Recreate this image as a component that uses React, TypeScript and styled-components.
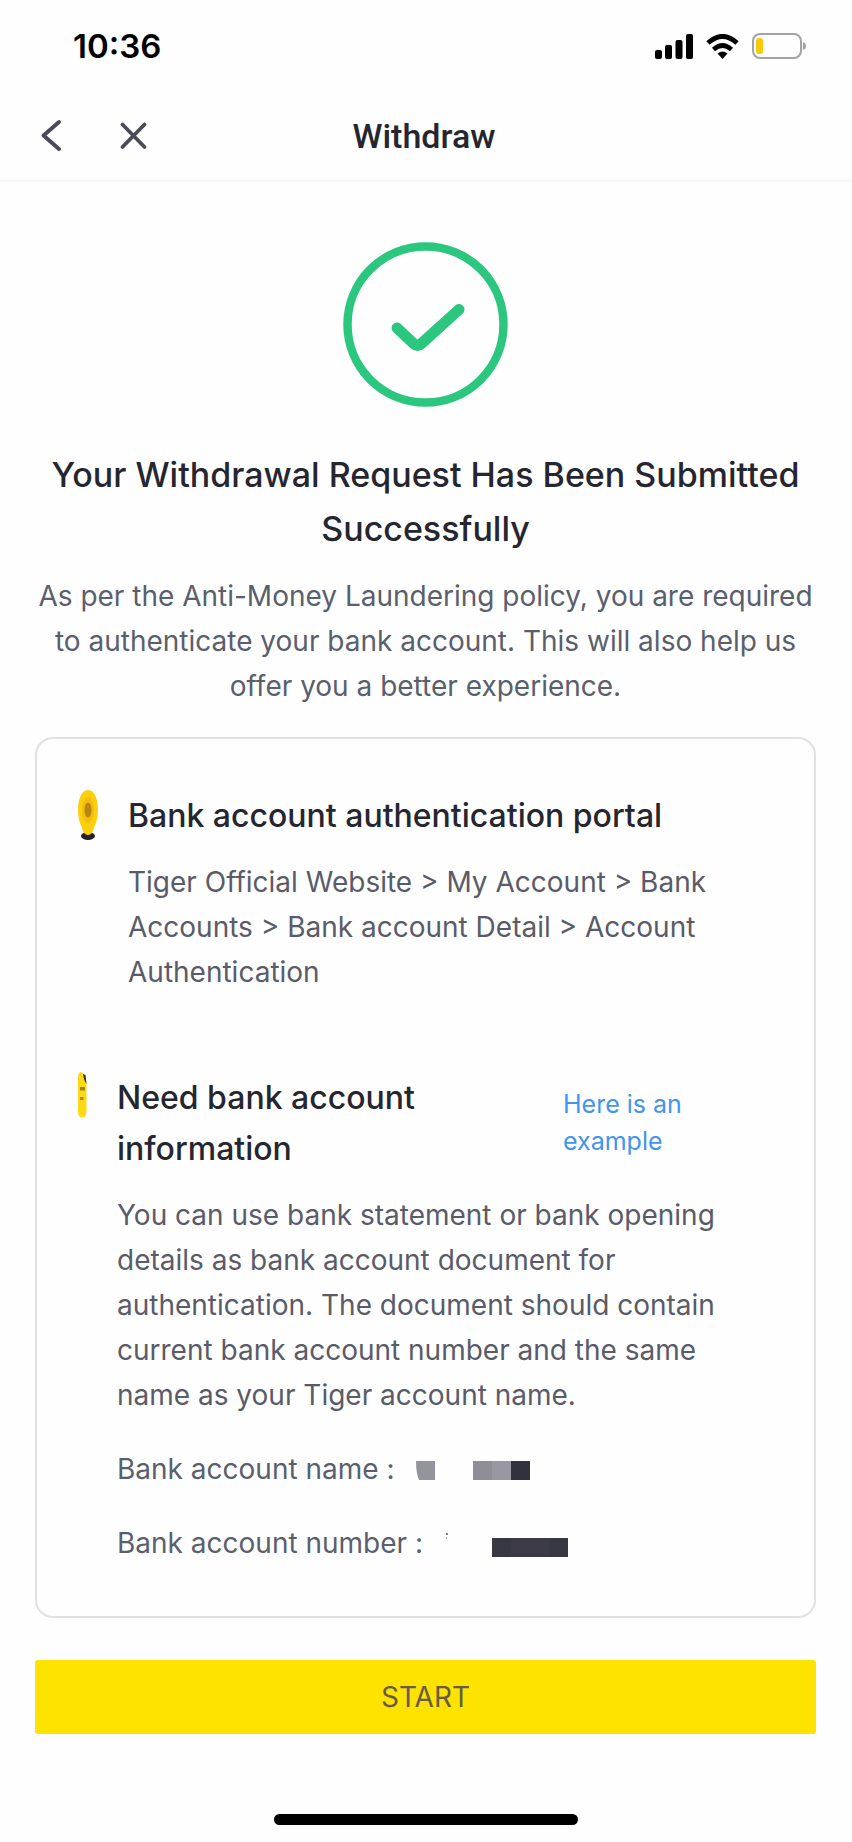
import React from "react";
import styled, { createGlobalStyle } from "styled-components";

const GlobalStyle = createGlobalStyle`
  *, *::before, *::after { box-sizing: border-box; }
  body {
    margin: 0;
    background: #fefefe;
    font-family: Inter, "Liberation Sans", sans-serif;
    color: #25262f;
  }
  h1, h2, h3, p, dl, dd, dt { margin: 0; font-weight: 400; }
`;

const Screen = styled.div`
  min-height: 100vh;
  display: flex;
  flex-direction: column;
`;

const StatusBar = styled.div`
  display: flex;
  align-items: center;
  justify-content: space-between;
  height: 92px;
  padding: 0 45px 0 73px;
`;

const Time = styled.time`
  font-size: 33px;
  font-weight: 600;
  line-height: 40px;
  color: #000;
`;

const StatusIcons = styled.div`
  display: flex;
  align-items: center;
  gap: 13px;
`;

const NavBar = styled.header`
  display: grid;
  grid-template-columns: 1fr auto 1fr;
  align-items: center;
  height: 90px;
  padding: 0 36px 0 32px;
  border-bottom: 2px solid #f6f6f7;
`;

const NavActions = styled.div`
  display: flex;
  gap: 42px;
`;

const IconButton = styled.button`
  display: flex;
  align-items: center;
  justify-content: center;
  width: 40px;
  height: 40px;
  padding: 0;
  border: 0;
  background: none;
  color: #4b4b58;
`;

const NavTitle = styled.h1`
  font-family: Roboto, Inter, sans-serif;
  font-size: 34px;
  font-weight: 500;
  line-height: 40px;
`;

const Main = styled.main`
  flex: 1;
  display: flex;
  flex-direction: column;
  padding: 60px 36px 0 35px;
`;

const ResultIcon = styled.svg`
  align-self: center;
`;

const ResultTitle = styled.h2`
  margin-top: 40px;
  font-size: 34px;
  font-weight: 500;
  line-height: 54px;
  text-align: center;
`;

const ResultText = styled.p`
  margin-top: 18px;
  font-size: 28px;
  line-height: 45px;
  color: #5a5f6d;
  text-align: center;
`;

const Card = styled.section`
  display: flex;
  flex-direction: column;
  gap: 77px;
  margin-top: 28px;
  padding: 51px 71px 50px 40px;
  border: 2px solid #e1e1e3;
  border-radius: 18px;
`;

const Step = styled.article`
  display: flex;
  align-items: flex-start;
  gap: 29px;
`;

const StepBody = styled.div`
  flex: 1;
  display: flex;
  flex-direction: column;
  gap: 19px;
`;

const StepHeader = styled.div`
  display: flex;
  justify-content: space-between;
  align-items: center;
`;

const StepTitle = styled.h3`
  font-size: 32px;
  font-weight: 500;
  line-height: 51px;
`;

const StepText = styled.p`
  font-size: 28px;
  line-height: 45px;
  color: #5a5b68;
`;

const ExampleLink = styled.a`
  flex: 0 0 180px;
  font-size: 25px;
  line-height: 37px;
  color: #4394ec;
  text-decoration: none;
`;

const Details = styled.dl`
  display: flex;
  flex-direction: column;
  gap: 29px;
  margin-top: 10px;
  font-size: 28px;
  line-height: 45px;
  color: #5a5f6d;
`;

const DetailRow = styled.div`
  display: flex;
  align-items: center;
  gap: 21px;
`;

const Masked = styled.dd`
  display: flex;
  align-items: center;
`;

const Footer = styled.footer`
  display: flex;
  flex-direction: column;
  align-items: center;
  padding: 42px 36px 17px 35px;
`;

const StartButton = styled.button`
  width: 100%;
  height: 74px;
  border: 0;
  border-radius: 3px;
  background: #fee200;
  color: #675b4c;
  font-family: inherit;
  font-size: 28px;
`;

const HomeIndicator = styled.div`
  width: 304px;
  height: 11px;
  margin-top: 80px;
  border-radius: 6px;
  background: #000;
`;

export default function App() {
  return (
    <>
      <GlobalStyle />
      <Screen>
        <StatusBar>
          <Time>10:36</Time>
          <StatusIcons>
            <svg width="38" height="25" viewBox="0 0 38 25" fill="#000" aria-hidden="true">
              <rect x="0" y="16" width="7" height="9" rx="2" />
              <rect x="10" y="11" width="7" height="14" rx="2" />
              <rect x="20.500" y="6" width="7" height="19" rx="2" />
              <rect x="31" y="0" width="7" height="25" rx="2" />
            </svg>
            <svg width="33" height="25" viewBox="0 0 33 25" aria-hidden="true">
              <path d="M2 9 Q16.500 -4 31 9" fill="none" stroke="#000" strokeWidth="5" />
              <path d="M7.500 15.500 Q16.500 7.500 25.500 15.500" fill="none" stroke="#000" strokeWidth="4.600" />
              <path d="M11.500 19.500 Q16.500 15.500 21.500 19.500 L16.500 25 Z" fill="#000" />
            </svg>
            <svg width="55" height="26" viewBox="0 0 55 26" aria-hidden="true">
              <rect x="1" y="1" width="48" height="24" rx="7" fill="none" stroke="#a3a3a3" strokeWidth="2" />
              <rect x="4" y="5" width="7" height="16" rx="3" fill="#fbc90b" />
              <path d="M51 9 Q54 10 54 13 Q54 16 51 17 Z" fill="#a3a3a3" />
            </svg>
          </StatusIcons>
        </StatusBar>

        <NavBar>
          <NavActions>
            <IconButton type="button" aria-label="Back">
              <svg width="40" height="40" viewBox="0 0 40 40" fill="none" stroke="currentColor" strokeWidth="4" strokeLinecap="round" strokeLinejoin="round">
                <path d="M27 6 L11.500 19.500 L27 33" />
              </svg>
            </IconButton>
            <IconButton type="button" aria-label="Close">
              <svg width="40" height="40" viewBox="0 0 40 40" fill="none" stroke="currentColor" strokeWidth="3.800" strokeLinecap="round">
                <path d="M8.500 8.500 L30.500 31 M30.500 8.500 L8.500 31" />
              </svg>
            </IconButton>
          </NavActions>
          <NavTitle>Withdraw</NavTitle>
        </NavBar>

        <Main>
          <ResultIcon width="166" height="166" viewBox="0 0 166 166" fill="none" stroke="#2bc77f" aria-hidden="true">
            <circle cx="82.500" cy="82.500" r="78" strokeWidth="8.500" />
            <path d="M54 86 L70.500 101.500 Q74.500 105 78.500 101.500 L116 67.500" strokeWidth="11" strokeLinecap="round" strokeLinejoin="round" />
          </ResultIcon>
          <ResultTitle>Your Withdrawal Request Has Been Submitted Successfully</ResultTitle>
          <ResultText>
            As per the Anti-Money Laundering policy, you are required to authenticate your bank
            account. This will also help us offer you a better experience.
          </ResultText>

          <Card>
            <Step>
              <svg width="22" height="52" viewBox="0 0 22 52" aria-hidden="true">
                <ellipse cx="11" cy="46" rx="7" ry="4" fill="#25202a" />
                <path d="M11 0 C18 0 21 10 21 20 C21 31 17 37 15 43 Q11 47 7 43 C5 37 1 31 1 20 C1 10 4 0 11 0 Z" fill="#fbd00b" />
                <ellipse cx="11" cy="20" rx="6" ry="13" fill="#f5bd0b" />
                <ellipse cx="11" cy="20" rx="3.500" ry="7.500" fill="#b98412" />
              </svg>
              <StepBody>
                <StepTitle>Bank account authentication portal</StepTitle>
                <StepText>
                  Tiger Official Website &gt; My Account &gt; Bank Accounts &gt; Bank account Detail &gt; Account
                  Authentication
                </StepText>
              </StepBody>
            </Step>

            <Step>
              <svg width="11" height="48" viewBox="0 0 11 48" aria-hidden="true">
                <path d="M4 0 Q7 0 9.500 10 V40 Q9 45.500 5.500 45.500 Q1.500 45.500 1 40 V5 Q1.500 0 4 0 Z" fill="#fbd914" />
                <path d="M6 2 L8.500 3 L9.500 12 Q7 9 6 2 Z" fill="#3a2d2a" />
                <rect x="3" y="15" width="5" height="3.500" fill="#a7841b" />
                <rect x="3" y="25" width="3.500" height="3" fill="#b08e18" />
              </svg>
              <StepBody>
                <StepHeader>
                  <StepTitle>
                    Need bank account
                    <br />
                    information
                  </StepTitle>
                  <ExampleLink href="#example">
                    Here is an
                    <br />
                    example
                  </ExampleLink>
                </StepHeader>
                <StepText>
                  You can use bank statement or bank opening details as bank account document for
                  authentication. The document should contain current bank account number and the same
                  name as your Tiger account name.
                </StepText>
                <Details>
                  <DetailRow>
                    <dt>Bank account name :</dt>
                    <Masked>
                      <svg width="114" height="23" viewBox="0 -3 114 23" aria-hidden="true">
                        <path d="M0 0 H19 V19 H3 Q0 12 0 0 Z" fill="#94949c" />
                        <rect x="57" width="19" height="19" fill="#8f8e96" />
                        <rect x="76" width="19" height="19" fill="#9998a2" />
                        <rect x="95" width="19" height="19" fill="#32323f" />
                      </svg>
                    </Masked>
                  </DetailRow>
                  <DetailRow>
                    <dt>Bank account number :</dt>
                    <Masked>
                      <svg width="124" height="27" viewBox="0 0 124 27" aria-hidden="true">
                        <circle cx="3" cy="4" r="1" fill="#55555f" />
                        <circle cx="2.500" cy="8" r="0.800" fill="#85858f" />
                        <rect x="48" y="8" width="76" height="19" fill="#383842" />
                        <rect x="67" y="8" width="38" height="19" fill="#3c3a45" />
                      </svg>
                    </Masked>
                  </DetailRow>
                </Details>
              </StepBody>
            </Step>
          </Card>
        </Main>

        <Footer>
          <StartButton type="button">START</StartButton>
          <HomeIndicator />
        </Footer>
      </Screen>
    </>
  );
}
